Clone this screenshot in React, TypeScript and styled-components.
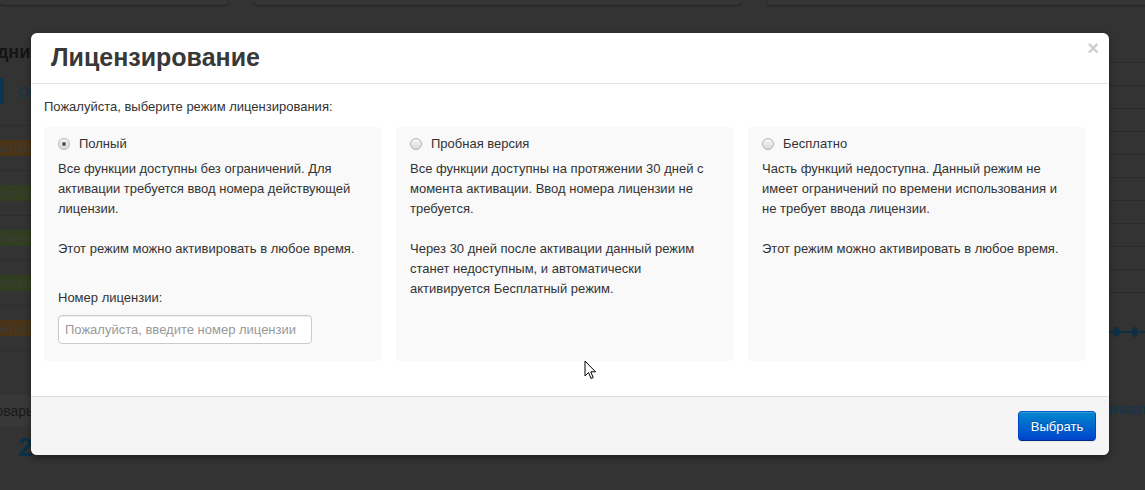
import React from 'react';
import styled, { createGlobalStyle } from 'styled-components';

const GlobalStyle = createGlobalStyle`
  html, body {
    margin: 0;
    padding: 0;
    height: 100%;
    background: #333333;
  }
  body {
    font-family: "Liberation Sans", Arial, sans-serif;
    font-size: 13px;
    line-height: 20px;
    color: #333333;
  }
`;

// Dimmed page behind the modal
const Page = styled.div`
  position: relative;
  width: 1145px;
  height: 490px;
  overflow: hidden;
  background: #333333;
`;

const TopRow = styled.div`
  display: flex;
  gap: 26px;
  margin-top: -20px;
  height: 25px;
`;

const TopCard = styled.div<{ w: number }>`
  width: ${p => p.w}px;
  flex-shrink: 0;
  background: #353535;
  border-radius: 0 0 4px 4px;
  box-shadow: 0 1px 2px rgba(0, 0, 0, 0.35);
`;

const Main = styled.div`
  display: flex;
  justify-content: space-between;
  margin-top: 35px;
`;

const LeftCol = styled.div`
  width: 180px;
  margin-left: -90px;
  flex-shrink: 0;
`;

const PageHeading = styled.div`
  font-weight: bold;
  font-size: 18px;
  line-height: 24px;
  color: #141414;
  padding-left: 32px;
  white-space: nowrap;
`;

const ActionRow = styled.div`
  display: flex;
  align-items: center;
  gap: 14px;
  margin-top: 14px;
`;

const DimButton = styled.div`
  width: 94px;
  height: 27px;
  border-radius: 4px;
  background: #0a3652;
`;

const DimLink = styled.span`
  font-size: 14px;
  color: #10354f;
`;

const TableRows = styled.div`
  margin-top: 20px;
  border-top: 1px solid #2d2d2d;
`;

const TableRow = styled.div`
  height: 44px;
  border-bottom: 1px solid #2d2d2d;
  display: flex;
  align-items: center;
  padding-left: 52px;
`;

const DimLabel = styled.span<{ tone: 'orange' | 'green' }>`
  display: inline-block;
  padding: 0 8px;
  font-size: 13px;
  line-height: 16px;
  color: #3c3c34;
  border-radius: 3px;
  background: ${p => (p.tone === 'orange' ? '#4a3316' : '#313f20')};
`;

const FootHead = styled.div`
  margin-top: 44px;
  background: #383838;
  padding: 6px 0 6px 78px;
  font-size: 14px;
  color: #1b1b1b;
  white-space: nowrap;
`;

const BigNumber = styled.div`
  font-size: 26px;
  font-weight: bold;
  color: #0b3049;
  padding: 10px 0 0 108px;
`;

const RightCol = styled.div`
  width: 60px;
  margin-right: -24px;
  flex-shrink: 0;
`;

const RightLine = styled.div`
  height: 22px;
  border-bottom: 1px solid #2b2b2b;
`;

const DotRow = styled.div`
  display: flex;
  align-items: center;
  margin-top: 34px;
  padding-left: 4px;
  height: 10px;
  background: linear-gradient(#0f2f45, #0f2f45) center / 100% 2px no-repeat;
`;

const Dot = styled.span`
  width: 10px;
  height: 10px;
  border-radius: 50%;
  background: #0f2f45;
  margin-right: 12px;
`;

const RightLink = styled.div`
  margin-top: 62px;
  font-size: 14px;
  color: #0f3550;
  margin-left: -14px;
  white-space: nowrap;
`;

// Modal
const Modal = styled.div`
  position: absolute;
  top: 33px;
  left: 31px;
  width: 1078px;
  background: #ffffff;
  border-radius: 6px;
  box-shadow: 0 3px 7px rgba(0, 0, 0, 0.4);
  overflow: hidden;
`;

const Header = styled.div`
  display: flex;
  align-items: flex-start;
  justify-content: space-between;
  height: 50px;
  padding: 0 10px 0 20px;
  border-bottom: 1px solid #e5e5e5;
`;

const Title = styled.h3`
  margin: 0;
  padding-top: 8px;
  font-size: 25px;
  line-height: 32px;
  font-weight: bold;
  color: #383838;
`;

const Close = styled.button`
  border: 0;
  background: none;
  padding: 0;
  margin-top: 5px;
  font-family: "Liberation Sans", Arial, sans-serif;
  font-size: 20px;
  line-height: 20px;
  font-weight: bold;
  color: #000000;
  opacity: 0.2;
  cursor: pointer;
`;

const Body = styled.div`
  padding: 13px 13px 35px;
`;

const Intro = styled.p`
  margin: 0 0 10px;
`;

const Options = styled.div`
  display: flex;
  gap: 14px;
`;

const OptionCard = styled.div`
  width: 338px;
  box-sizing: border-box;
  padding: 7px 14px 17px;
  background: #f9f9f9;
  border-radius: 4px;
`;

const RadioLabel = styled.label`
  display: flex;
  align-items: center;
  gap: 9px;
  cursor: pointer;
`;

const RadioMark = styled.span<{ checked?: boolean }>`
  position: relative;
  width: 12px;
  height: 12px;
  box-sizing: border-box;
  border-radius: 50%;
  border: 1px solid #b4b4b4;
  background: linear-gradient(#f7f7f7, #d9d9d9);
  flex-shrink: 0;

  &::after {
    content: '';
    display: ${p => (p.checked ? 'block' : 'none')};
    position: absolute;
    left: 3px;
    top: 3px;
    width: 4px;
    height: 4px;
    border-radius: 50%;
    background: #555555;
  }
`;

const Description = styled.p<{ spaced?: boolean }>`
  margin: ${p => (p.spaced ? '20px 0 0' : '5px 0 0')};
`;

const FieldLabel = styled.div`
  margin-top: 29px;
  margin-bottom: 7px;
`;

const LicenseInput = styled.input`
  width: 254px;
  height: 29px;
  box-sizing: border-box;
  padding: 4px 6px;
  border: 1px solid #cccccc;
  border-radius: 4px;
  background: #ffffff;
  box-shadow: inset 0 1px 1px rgba(0, 0, 0, 0.075);
  font-family: "Liberation Sans", Arial, sans-serif;
  font-size: 13px;
  color: #555555;
  outline: none;

  &::placeholder {
    color: #999999;
  }
`;

const Footer = styled.div`
  display: flex;
  justify-content: flex-end;
  padding: 14px 13px 14px;
  background: #f5f5f5;
  border-top: 1px solid #dddddd;
`;

const PrimaryButton = styled.button`
  width: 78px;
  height: 30px;
  border: 1px solid #0044cc;
  border-color: #0055cc #0044cc #002a80;
  border-radius: 4px;
  background: linear-gradient(#0088cc, #0044cc);
  box-shadow: inset 0 1px 0 rgba(255, 255, 255, 0.2), 0 1px 2px rgba(0, 0, 0, 0.05);
  color: #ffffff;
  font-family: "Liberation Sans", Arial, sans-serif;
  font-size: 13px;
  text-shadow: 0 -1px 0 rgba(0, 0, 0, 0.25);
  cursor: pointer;
`;

const Cursor = styled.svg`
  position: absolute;
  left: 584px;
  top: 360px;
`;

type Mode = {
  id: string;
  title: string;
  paragraphs: string[][];
  withKey?: boolean;
};

const modes: Mode[] = [
  {
    id: 'full',
    title: 'Полный',
    paragraphs: [
      ['Все функции доступны без ограничений. Для', 'активации требуется ввод номера действующей', 'лицензии.'],
      ['Этот режим можно активировать в любое время.'],
    ],
    withKey: true,
  },
  {
    id: 'trial',
    title: 'Пробная версия',
    paragraphs: [
      ['Все функции доступны на протяжении 30 дней с', 'момента активации. Ввод номера лицензии не', 'требуется.'],
      ['Через 30 дней после активации данный режим', 'станет недоступным, и автоматически', 'активируется Бесплатный режим.'],
    ],
  },
  {
    id: 'free',
    title: 'Бесплатно',
    paragraphs: [
      ['Часть функций недоступна. Данный режим не', 'имеет ограничений по времени использования и', 'не требует ввода лицензии.'],
      ['Этот режим можно активировать в любое время.'],
    ],
  },
];

const labelTones: ('orange' | 'green')[] = ['orange', 'green', 'green', 'green', 'orange'];
const labelTexts = ['Открытый', 'Обработан', 'Выполнен', 'Выполнен', 'Открытый'];

export default function App() {
  const [selected, setSelected] = React.useState('full');

  return (
    <Page>
      <GlobalStyle />

      <TopRow>
        <TopCard w={228} />
        <TopCard w={487} />
        <TopCard w={400} />
      </TopRow>

      <Main>
        <LeftCol>
          <PageHeading>Последние</PageHeading>
          <ActionRow>
            <DimButton />
            <DimLink>Обновить</DimLink>
          </ActionRow>
          <TableRows>
            {labelTexts.map((t, i) => (
              <TableRow key={i}>
                <DimLabel tone={labelTones[i]}>{t}</DimLabel>
              </TableRow>
            ))}
          </TableRows>
          <FootHead>Товары на складе</FootHead>
          <BigNumber>2</BigNumber>
        </LeftCol>

        <RightCol>
          {Array.from({ length: 11 }).map((_, i) => (
            <RightLine key={i} />
          ))}
          <DotRow>
            <Dot />
            <Dot />
            <Dot />
          </DotRow>
          <RightLink>Показать</RightLink>
        </RightCol>
      </Main>

      <Modal>
        <Header>
          <Title>Лицензирование</Title>
          <Close aria-label="Закрыть">×</Close>
        </Header>

        <Body>
          <Intro>Пожалуйста, выберите режим лицензирования:</Intro>
          <Options>
            {modes.map(mode => (
              <OptionCard key={mode.id}>
                <RadioLabel onClick={() => setSelected(mode.id)}>
                  <RadioMark checked={selected === mode.id} />
                  {mode.title}
                </RadioLabel>
                {mode.paragraphs.map((lines, i) => (
                  <Description key={i} spaced={i > 0}>
                    {lines.map((line, j) => (
                      <React.Fragment key={j}>
                        {line}
                        {j < lines.length - 1 && <br />}
                      </React.Fragment>
                    ))}
                  </Description>
                ))}
                {mode.withKey && (
                  <>
                    <FieldLabel>Номер лицензии:</FieldLabel>
                    <LicenseInput placeholder="Пожалуйста, введите номер лицензии" />
                  </>
                )}
              </OptionCard>
            ))}
          </Options>
        </Body>

        <Footer>
          <PrimaryButton>Выбрать</PrimaryButton>
        </Footer>
      </Modal>

      <Cursor width="13" height="20" viewBox="0 0 13 20">
        <path d="M1 1 L1 16 L4.5 12.5 L7 18.5 L9.2 17.6 L6.8 11.8 L11.5 11.8 Z" fill="#ffffff" stroke="#000000" strokeWidth="1" strokeLinejoin="round" />
      </Cursor>
    </Page>
  );
}
